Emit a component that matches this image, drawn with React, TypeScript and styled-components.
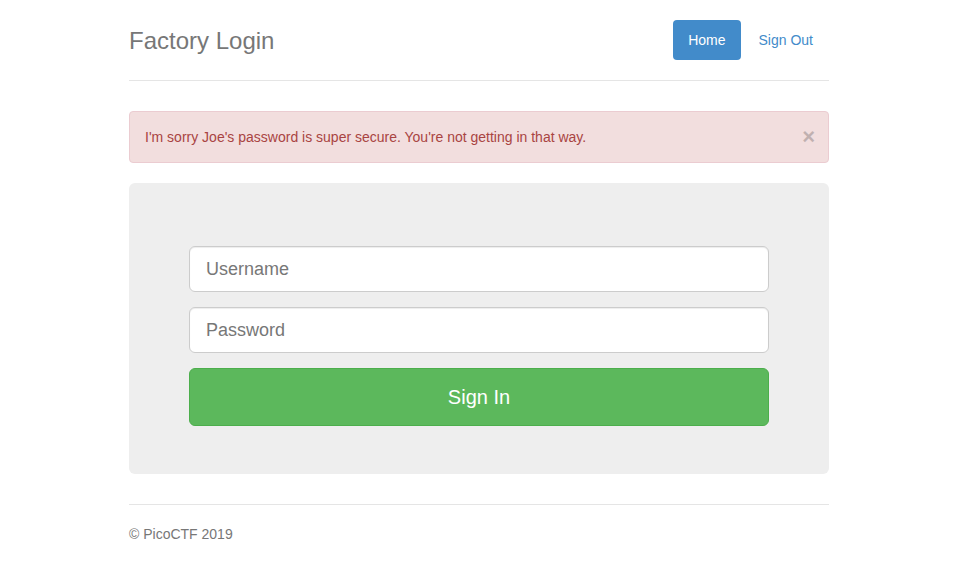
import React from "react";
import styled, { createGlobalStyle } from "styled-components";

const Global = createGlobalStyle`
  * { box-sizing: border-box; }
  body {
    margin: 0;
    padding-top: 20px;
    padding-bottom: 20px;
    font-family: "Liberation Sans", Arial, Helvetica, sans-serif;
    font-size: 14px;
    line-height: 1.428571429;
    color: #333;
    background: #fff;
  }
`;

const Container = styled.div`
  max-width: 730px;
  margin: 0 auto;
  padding: 0 15px;
`;

const Header = styled.header`
  display: flex;
  justify-content: space-between;
  align-items: center;
  padding-bottom: 20px;
  border-bottom: 1px solid #e5e5e5;
  margin-bottom: 30px;
`;

const Title = styled.h3`
  margin: 0;
  padding-top: 2px;
  font-size: 24px;
  font-weight: 500;
  line-height: 38px;
  color: #777;
`;

const Nav = styled.ul`
  display: flex;
  list-style: none;
  margin: 0 1px 0 0;
  padding: 0;
  gap: 3px;
`;

const Pill = styled.a<{ $active?: boolean }>`
  display: block;
  padding: 10px 15px;
  line-height: 20px;
  font-size: 14px;
  border-radius: 4px;
  text-decoration: none;
  color: ${(p) => (p.$active ? "#fff" : "#428bca")};
  background: ${(p) => (p.$active ? "#428bca" : "transparent")};
`;

const Alert = styled.div`
  display: flex;
  justify-content: space-between;
  align-items: center;
  padding: 15px;
  margin-bottom: 20px;
  border: 1px solid #ebccd1;
  border-radius: 4px;
  background: #f2dede;
  color: #a94442;
  line-height: 20px;
`;

const Close = styled.button`
  border: 0;
  background: transparent;
  padding: 0;
  margin-right: -2px;
  font-family: "Liberation Sans", Arial, sans-serif;
  font-size: 22px;
  font-weight: 700;
  line-height: 20px;
  color: #000;
  opacity: 0.2;
  cursor: pointer;
`;

const Jumbotron = styled.div`
  background: #eee;
  border-radius: 6px;
  padding: 63px 60px 48px;
  margin-bottom: 30px;
`;

const Form = styled.form`
  display: flex;
  flex-direction: column;
  gap: 15px;
`;

const Input = styled.input`
  display: block;
  width: 100%;
  height: 46px;
  padding: 10px 16px;
  font-family: "Liberation Sans", Arial, sans-serif;
  font-size: 18px;
  line-height: 1.33;
  color: #555;
  background: #fff;
  border: 1px solid #ccc;
  border-radius: 6px;
  box-shadow: inset 0 1px 1px rgba(0, 0, 0, 0.075);
  outline: none;
  &::placeholder {
    color: #777;
  }
`;

const Button = styled.button`
  display: block;
  width: 100%;
  height: 58px;
  font-family: "Liberation Sans", Arial, sans-serif;
  font-size: 20px;
  color: #fff;
  background: #5cb85c;
  border: 1px solid #4cae4c;
  border-radius: 6px;
  cursor: pointer;
`;

const Footer = styled.footer`
  padding-top: 19px;
  border-top: 1px solid #e5e5e5;
  color: #777;
`;

const FooterText = styled.p`
  margin: 0 0 10px;
`;

export default function App() {
  return (
    <>
      <Global />
      <Container>
        <Header>
          <Title>Factory Login</Title>
          <Nav>
            <li>
              <Pill $active href="#">Home</Pill>
            </li>
            <li>
              <Pill href="#">Sign Out</Pill>
            </li>
          </Nav>
        </Header>
        <Alert>
          <span>I'm sorry Joe's password is super secure. You're not getting in that way.</span>
          <Close type="button">×</Close>
        </Alert>
        <Jumbotron>
          <Form onSubmit={(e) => e.preventDefault()}>
            <Input type="text" placeholder="Username" />
            <Input type="password" placeholder="Password" />
            <Button type="submit">Sign In</Button>
          </Form>
        </Jumbotron>
        <Footer>
          <FooterText>© PicoCTF 2019</FooterText>
        </Footer>
      </Container>
    </>
  );
}
